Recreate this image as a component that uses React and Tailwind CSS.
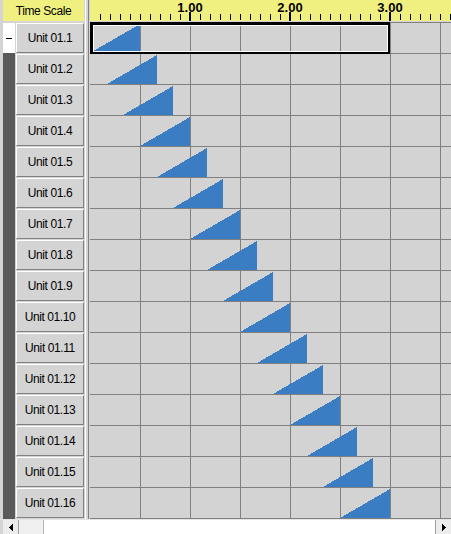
import React from "react";

const ROWS = Array.from({ length: 16 }, (_, i) => i);

function Ruler() {
  const ticks = [];
  for (let k = 1; k <= 36; k++) {
    const x = k * 10;
    if (k % 10 === 0) {
      ticks.push(<rect key={k} x={x - 1} y={12} width={2} height={9} fill="#000" />);
    } else {
      ticks.push(<rect key={k} x={x} y={14} width={1} height={6} fill="#000" />);
    }
  }
  return (
    <div className="flex flex-col">
      <div className="relative h-[21px] bg-[#f0f080] overflow-hidden">
        <svg width="361" height="21" className="absolute left-0 top-0" shapeRendering="crispEdges">
          {ticks}
        </svg>
        {["1.00", "2.00", "3.00"].map((t, i) => (
          <div
            key={t}
            className="absolute top-[1px] w-[40px] text-center text-[13px] leading-[13px] font-bold text-black font-['Liberation_Sans',Arial,sans-serif]"
            style={{ left: (i + 1) * 100 - 20 }}
          >
            {t}
          </div>
        ))}
      </div>
      <div className="h-[1px] bg-[#d4d4d4]" />
      <div className="h-[1px] bg-[#808080]" />
    </div>
  );
}

function GanttRow({ i }) {
  const start = (i * 100) / 6;
  return (
    <div className="relative h-[31px] border-b border-[#808080] flex bg-[#d3d3d3]">
      <div className="w-[50px] shrink-0" />
      {[0, 1, 2, 3, 4, 5].map((c) => (
        <div key={c} className="w-[50px] shrink-0 border-l border-[#808080]" />
      ))}
      <div className="flex-1 border-l border-[#808080]" />
      <svg
        width="50"
        height="29"
        className="absolute top-[1px]"
        style={{ left: start }}
        shapeRendering="crispEdges"
      >
        <polygon points="0,29 50,0 50,29" fill="#3b7dc3" />
      </svg>
      {i === 0 && (
        <div className="absolute left-0 top-[-1px] w-[300px] h-[32px] border-black border-t-[3px] border-l-[3px] border-r-2 border-b-2">
          <div className="w-full h-full border border-white" />
        </div>
      )}
    </div>
  );
}

export default function App() {
  return (
    <div className="w-[451px] h-[534px] flex flex-col bg-[#d4d4d4] overflow-hidden font-['Liberation_Sans',Arial,sans-serif] text-black">
      <div className="flex h-[519px]">
        <div className="w-[3px] shrink-0" />
        {/* left pane */}
        <div className="w-[81px] shrink-0 flex flex-col">
          <div className="h-[21px] bg-[#f0f080] flex items-center justify-center text-[12px] tracking-[-0.4px]">
            Time Scale
          </div>
          <div className="h-[2px]" />
          <div className="flex flex-1">
            <div className="w-[12px] bg-[#5a5a5a] flex flex-col">
              <div className="h-[30px] bg-white flex items-center justify-center">
                <div className="w-[6px] h-[1px] bg-black" />
              </div>
            </div>
            <div className="w-[1px]" />
            <div className="w-[68px] flex flex-col">
              {ROWS.map((i) => (
                <div
                  key={i}
                  className="h-[30px] mb-[1px] shrink-0 bg-[#d4d4d4] border border-t-white border-l-white border-r-[#808080] border-b-[#808080] flex items-center justify-center text-[12px] tracking-[-0.4px]"
                >
                  Unit 01.{i + 1}
                </div>
              ))}
            </div>
          </div>
        </div>
        {/* separator */}
        <div className="w-[6px] shrink-0 bg-[#d4d4d4] flex">
          <div className="ml-[1px] w-[4px] h-full border-l border-white border-r border-r-[#808080]" />
        </div>
        {/* right pane */}
        <div className="flex-1 flex flex-col min-w-0">
          <Ruler />
          {ROWS.map((i) => (
            <GanttRow key={i} i={i} />
          ))}
        </div>
      </div>
      {/* scrollbar */}
      <div className="h-[15px] flex bg-white border-t border-[#e4e4e4]">
        <div className="w-[3px] bg-[#d4d4d4]" />
        <div className="w-[16px] bg-[#ececec] border-r border-[#a0a0a0] flex items-center justify-center">
          <svg width="4" height="7" shapeRendering="crispEdges">
            <polygon points="4,0 0,3.5 4,7" fill="#000" />
          </svg>
        </div>
        <div className="w-[25px] bg-[#f0f0f0] border-r border-[#b4b4b4]" />
        <div className="flex-1" />
        <div className="w-[16px] bg-[#ececec] border-l border-[#a0a0a0] flex items-center justify-center">
          <svg width="4" height="7" shapeRendering="crispEdges">
            <polygon points="0,0 4,3.5 0,7" fill="#000" />
          </svg>
        </div>
      </div>
    </div>
  );
}
